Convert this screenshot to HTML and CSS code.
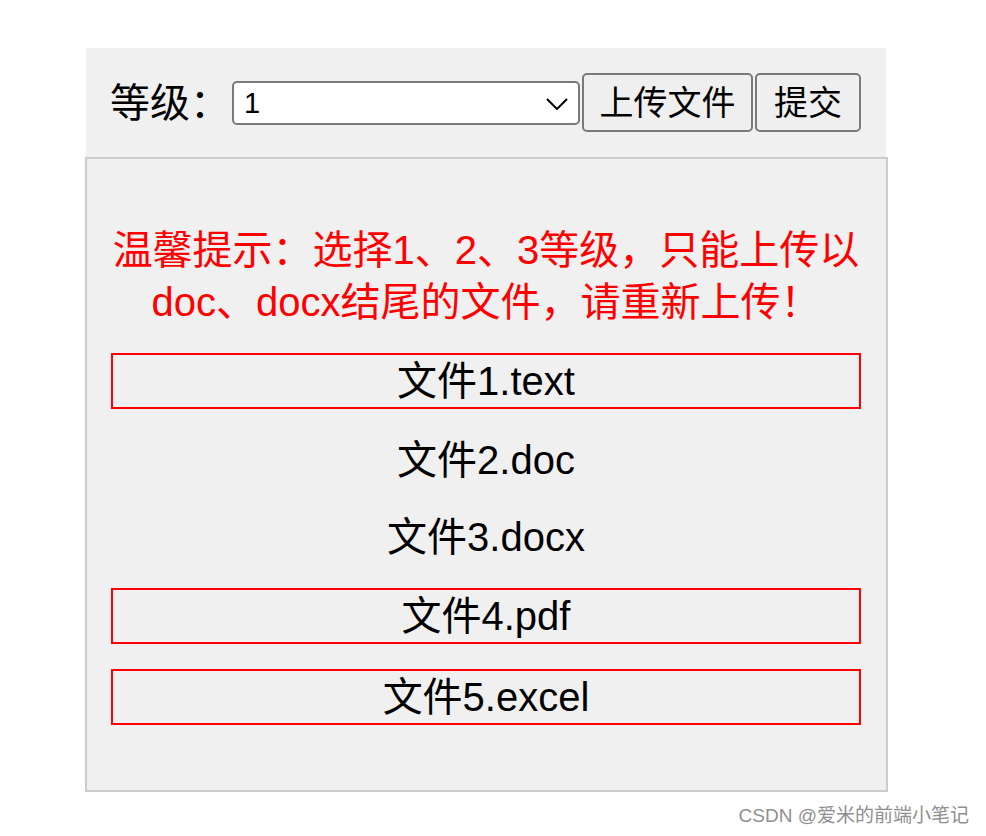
FILE: index.html
```html
<!DOCTYPE html>
<html lang="zh-CN">
<head>
<meta charset="utf-8">
<title>上传文件</title>
<link rel="stylesheet" href="styles.css">
</head>
<body>
<div class="page">
  <div class="toolbar">
    <span class="label">等级：</span>
    <div class="select-wrap">
      <select class="select">
        <option>1</option>
        <option>2</option>
        <option>3</option>
        <option>4</option>
      </select>
      <svg class="chevron" viewBox="0 0 22 12" aria-hidden="true"><path d="M1 1 L11 11 L21 1" fill="none" stroke="#000" stroke-width="2"/></svg>
    </div>
    <button class="btn btn-upload">上传文件</button>
    <button class="btn btn-submit">提交</button>
  </div>
  <div class="panel">
    <p class="tip">温馨提示：选择1、2、3等级，只能上传以<br>doc、docx结尾的文件，请重新上传！</p>
    <ul class="files">
      <li class="file invalid">文件1.text</li>
      <li class="file">文件2.doc</li>
      <li class="file">文件3.docx</li>
      <li class="file invalid">文件4.pdf</li>
      <li class="file invalid">文件5.excel</li>
    </ul>
  </div>
</div>
<div class="watermark">CSDN @爱米的前端小笔记</div>
</body>
</html>
```

FILE: styles.css
```css
body {
  margin: 0;
  background: #fff;
  font-family: "Liberation Sans", "Noto Sans CJK SC", sans-serif;
  color: #000;
}

.page {
  width: 803px;
  margin: 48px 0 0 85px;
}

.toolbar {
  box-sizing: border-box;
  width: 800px;
  height: 109px;
  margin-left: 1px;
  padding-left: 24px;
  background: #f0f0f0;
  display: flex;
  align-items: center;
}

.label {
  width: 122px;
  font-size: 40px;
  line-height: 52px;
}

.select-wrap {
  position: relative;
  width: 348px;
  height: 44px;
}

.select {
  appearance: none;
  -webkit-appearance: none;
  box-sizing: border-box;
  width: 100%;
  height: 100%;
  margin: 0;
  padding: 0 0 0 10px;
  border: 2px solid #7a7a7a;
  border-radius: 5px;
  background: #fff;
  color: #000;
  font-family: "Liberation Sans", "Noto Sans CJK SC", sans-serif;
  font-size: 29px;
  line-height: 40px;
}

.chevron {
  position: absolute;
  right: 12px;
  top: 17px;
  width: 22px;
  height: 12px;
  pointer-events: none;
}

.btn {
  box-sizing: border-box;
  height: 59px;
  margin: 0 0 0 2px;
  border: 2px solid #7a7a7a;
  border-radius: 5px;
  background: #efefef;
  color: #000;
  font-family: "Liberation Sans", "Noto Sans CJK SC", sans-serif;
  font-size: 34px;
  line-height: 1;
}

.btn-upload {
  padding: 0 15.5px;
}

.btn-submit {
  padding: 0 17px;
}

.panel {
  box-sizing: border-box;
  width: 803px;
  padding: 65px 25px 65px 24px;
  border: 2px solid #ccc;
  background: #f0f0f0;
}

.tip {
  margin: 0;
  color: #f00;
  font-size: 40px;
  line-height: 52px;
  text-align: center;
}

.files {
  list-style: none;
  margin: 25px 0 0;
  padding: 0;
  display: flex;
  flex-direction: column;
  gap: 25px;
}

.file {
  font-size: 40px;
  line-height: 52px;
  text-align: center;
}

.file.invalid {
  border: 2px solid #f00;
}

.watermark {
  margin-top: 13px;
  padding-right: 17px;
  text-align: right;
  color: #8f8f8f;
  font-size: 19px;
  line-height: 22px;
}
```
